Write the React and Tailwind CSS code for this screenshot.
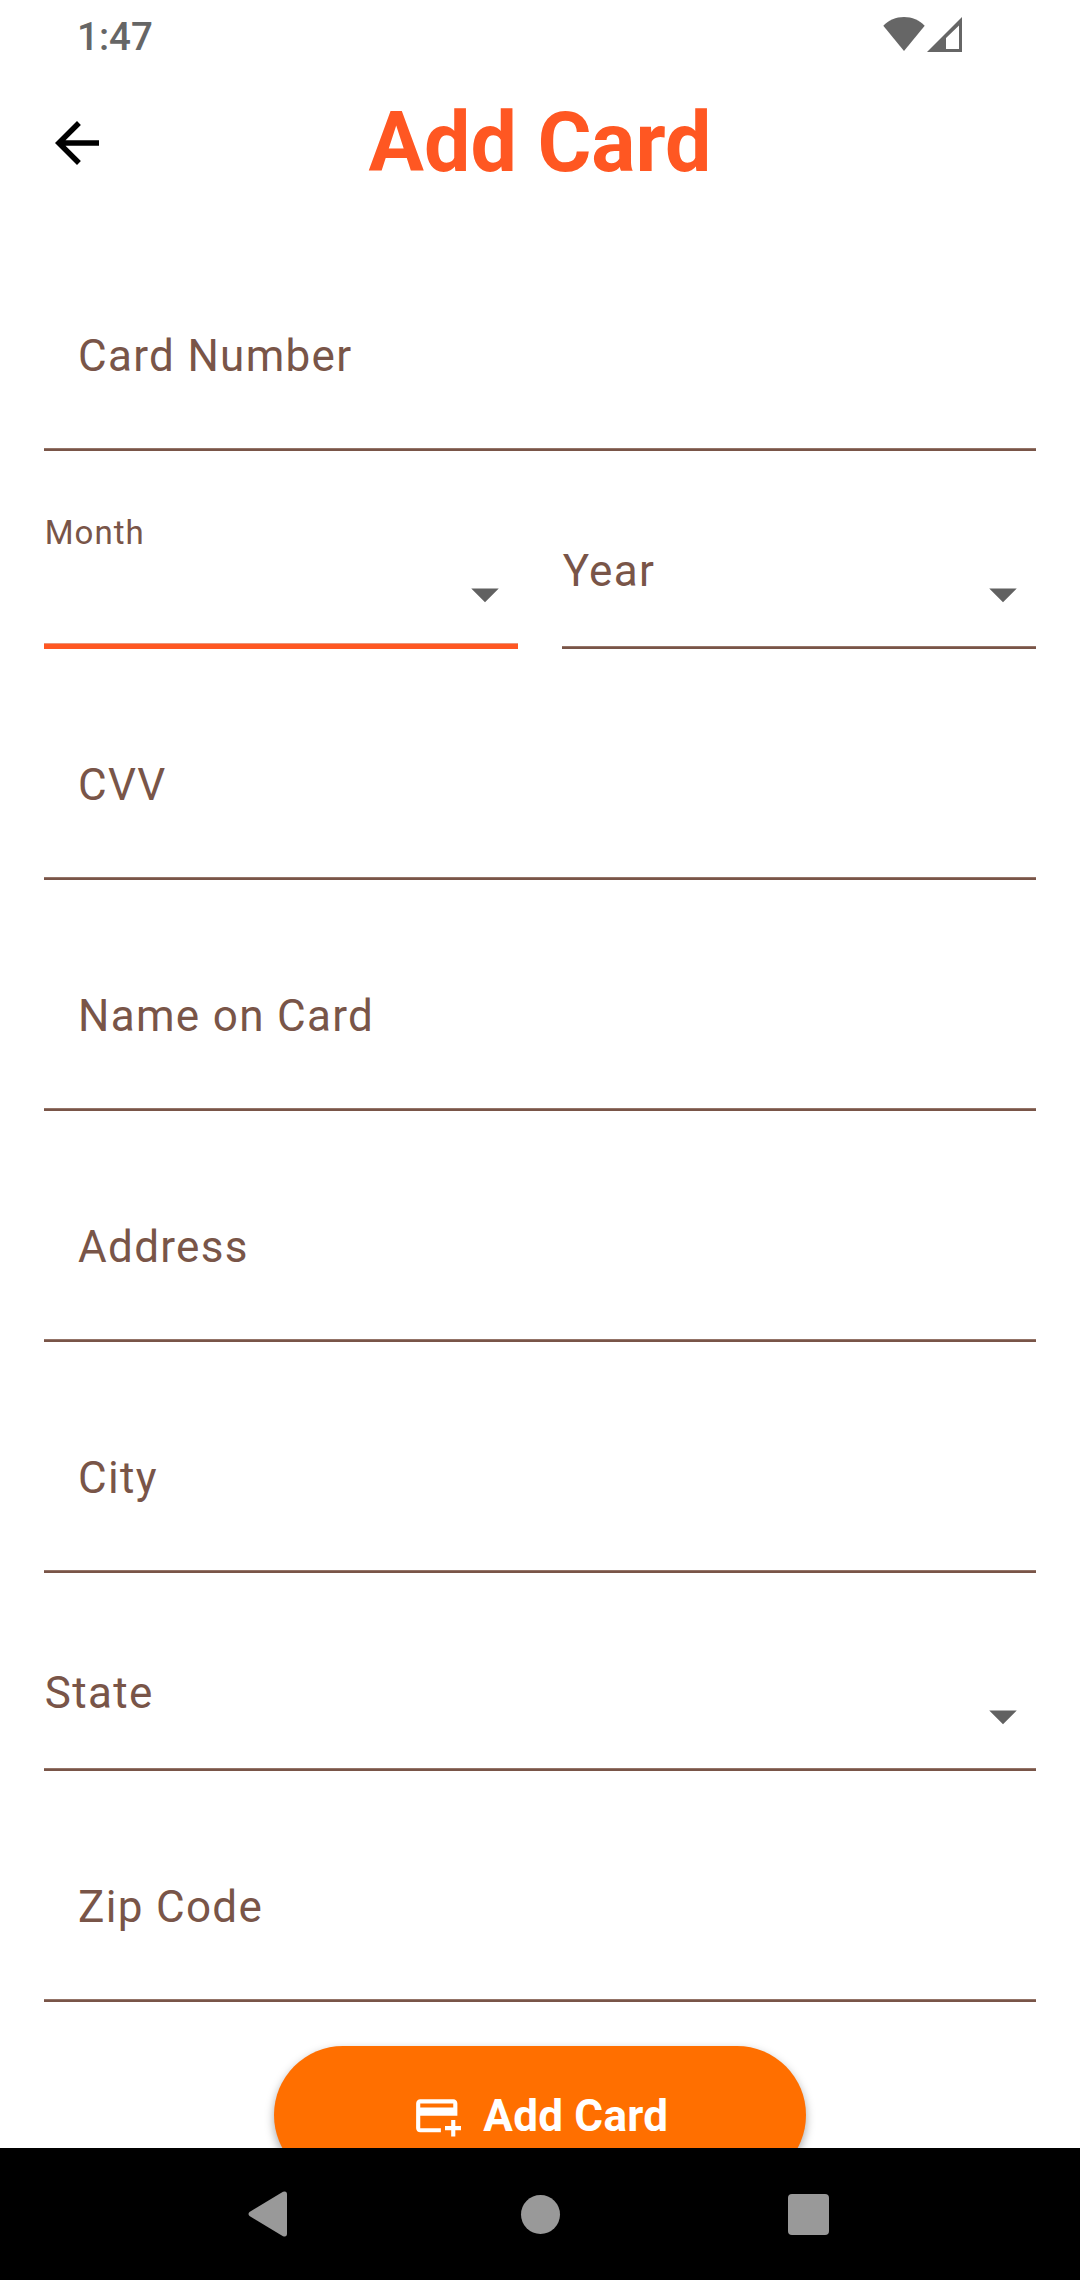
const WifiIcon = () => (
  <svg width="42" height="34" viewBox="0 0 42 34" fill="#666666">
    <path d="M21 0C12.9 0 5.7 3.2 0.3 8.8L21 34L41.7 8.8C36.3 3.2 29.100 0 21 0Z" />
  </svg>
);

const SignalIcon = () => (
  <svg width="35" height="35" viewBox="0 0 35 35" fill="#666666" fillRule="evenodd">
    <path d="M35 0V35H0ZM32 8.500L19 21V32H32Z" />
  </svg>
);

const BackIcon = () => (
  <svg width="66" height="66" viewBox="0 0 24 24" fill="#000">
    <path d="M20 11H7.830l5.590-5.590L12 4l-8 8 8 8 1.410-1.410L7.830 13H20v-2z" />
  </svg>
);

const CaretIcon = () => (
  <svg width="66" height="66" viewBox="0 0 24 24" fill="#616161">
    <path d="M7 10l5 5 5-5z" />
  </svg>
);

const AddCardIcon = () => (
  <svg width="49.5" height="49.5" viewBox="0 0 24 24" fill="#fff">
    <path d="M20 4H4c-1.110 0-1.990.89-1.990 2L2 18c0 1.110.89 2 2 2h10v-2H4v-6h18V6c0-1.110-.89-2-2-2zm0 4H4V6h16v2zm4 9v2h-3v3h-2v-3h-3v-2h3v-3h2v3h3z" />
  </svg>
);

const Underline = () => <div className="h-[3px] w-full shrink-0 border-t border-[#947468] bg-[#795548]" />;

const TextField = ({ label }) => (
  <div className="flex h-[231px] shrink-0 flex-col">
    <div className="flex flex-1 flex-col justify-end pb-[66px] pl-[34px]">
      <label className="text-[44px] leading-[52px] tracking-[1.32px]">{label}</label>
    </div>
    <Underline />
  </div>
);

const SelectField = ({ label, focused }) => (
  <div className="flex h-[198px] min-w-0 flex-1 shrink-0 flex-col">
    <div className="flex flex-1 items-end justify-between">
      {focused ? (
        <label className="mb-[91px] ml-[0.7px] text-[33px] leading-[39px] tracking-[1.03px]">{label}</label>
      ) : (
        <label className="mb-[49px] ml-[0.7px] text-[44px] leading-[52px] tracking-[1.375px]">{label}</label>
      )}
      <div className={focused ? "mb-[16px]" : "mb-[19px]"}>
        <CaretIcon />
      </div>
    </div>
    {focused ? (
      <div className="h-[6px] w-full shrink-0 border-t border-[#eb9478] bg-[#ff5722]" />
    ) : (
      <Underline />
    )}
  </div>
);

export default function App() {
  return (
    <div className="flex h-[2280px] w-[1080px] flex-col overflow-hidden bg-white font-['Roboto',sans-serif] text-[#795548]">
      <div className="flex h-[66px] shrink-0 items-start justify-between pr-[118px] pl-[77px] text-[#666666]">
        <span className="mt-[14px] text-[38.5px] leading-[45px] font-medium">1:47</span>
        <div className="mt-[17px] flex items-start gap-[2.5px]">
          <WifiIcon />
          <SignalIcon />
        </div>
      </div>

      <header className="grid h-[154px] shrink-0 grid-cols-[66px_1fr_66px] items-center px-[44px]">
        <BackIcon />
        <h1 className="text-center text-[82.5px] leading-[96px] font-bold text-[#ff5722]">Add Card</h1>
      </header>

      <main className="flex min-h-0 flex-1 flex-col overflow-hidden px-[44px]">
        <TextField label="Card Number" />
        <div className="flex shrink-0 gap-[44px]">
          <SelectField label="Month" focused />
          <SelectField label="Year" />
        </div>
        <TextField label="CVV" />
        <TextField label="Name on Card" />
        <TextField label="Address" />
        <TextField label="City" />
        <div className="flex shrink-0">
          <SelectField label="State" />
        </div>
        <TextField label="Zip Code" />
        <button className="mt-[44px] flex h-[138px] w-[532px] shrink-0 items-center justify-center gap-[22px] self-center rounded-full bg-[#ff6f00] pt-[2px] text-[44px] font-bold tracking-[0.25px] text-white shadow-[0_4px_10px_rgba(0,0,0,0.35)]">
          <AddCardIcon />
          <span className="leading-[52px]">Add Card</span>
        </button>
      </main>

      <nav className="flex h-[132px] shrink-0 items-center justify-between bg-black pr-[251px] pl-[248px]">
        <svg width="40" height="46" viewBox="0 0 40 46" fill="#999999">
          <path d="M1.500 21L35 0.800Q39 -0.500 39 3.500V42.500Q39 46.500 35 45.200L1.500 25Q-0.500 23 1.500 21Z" />
        </svg>
        <div className="ml-1 size-[39px] rounded-full bg-[#999999]" />
        <div className="size-[41px] rounded-[4px] bg-[#999999]" />
      </nav>
    </div>
  );
}
